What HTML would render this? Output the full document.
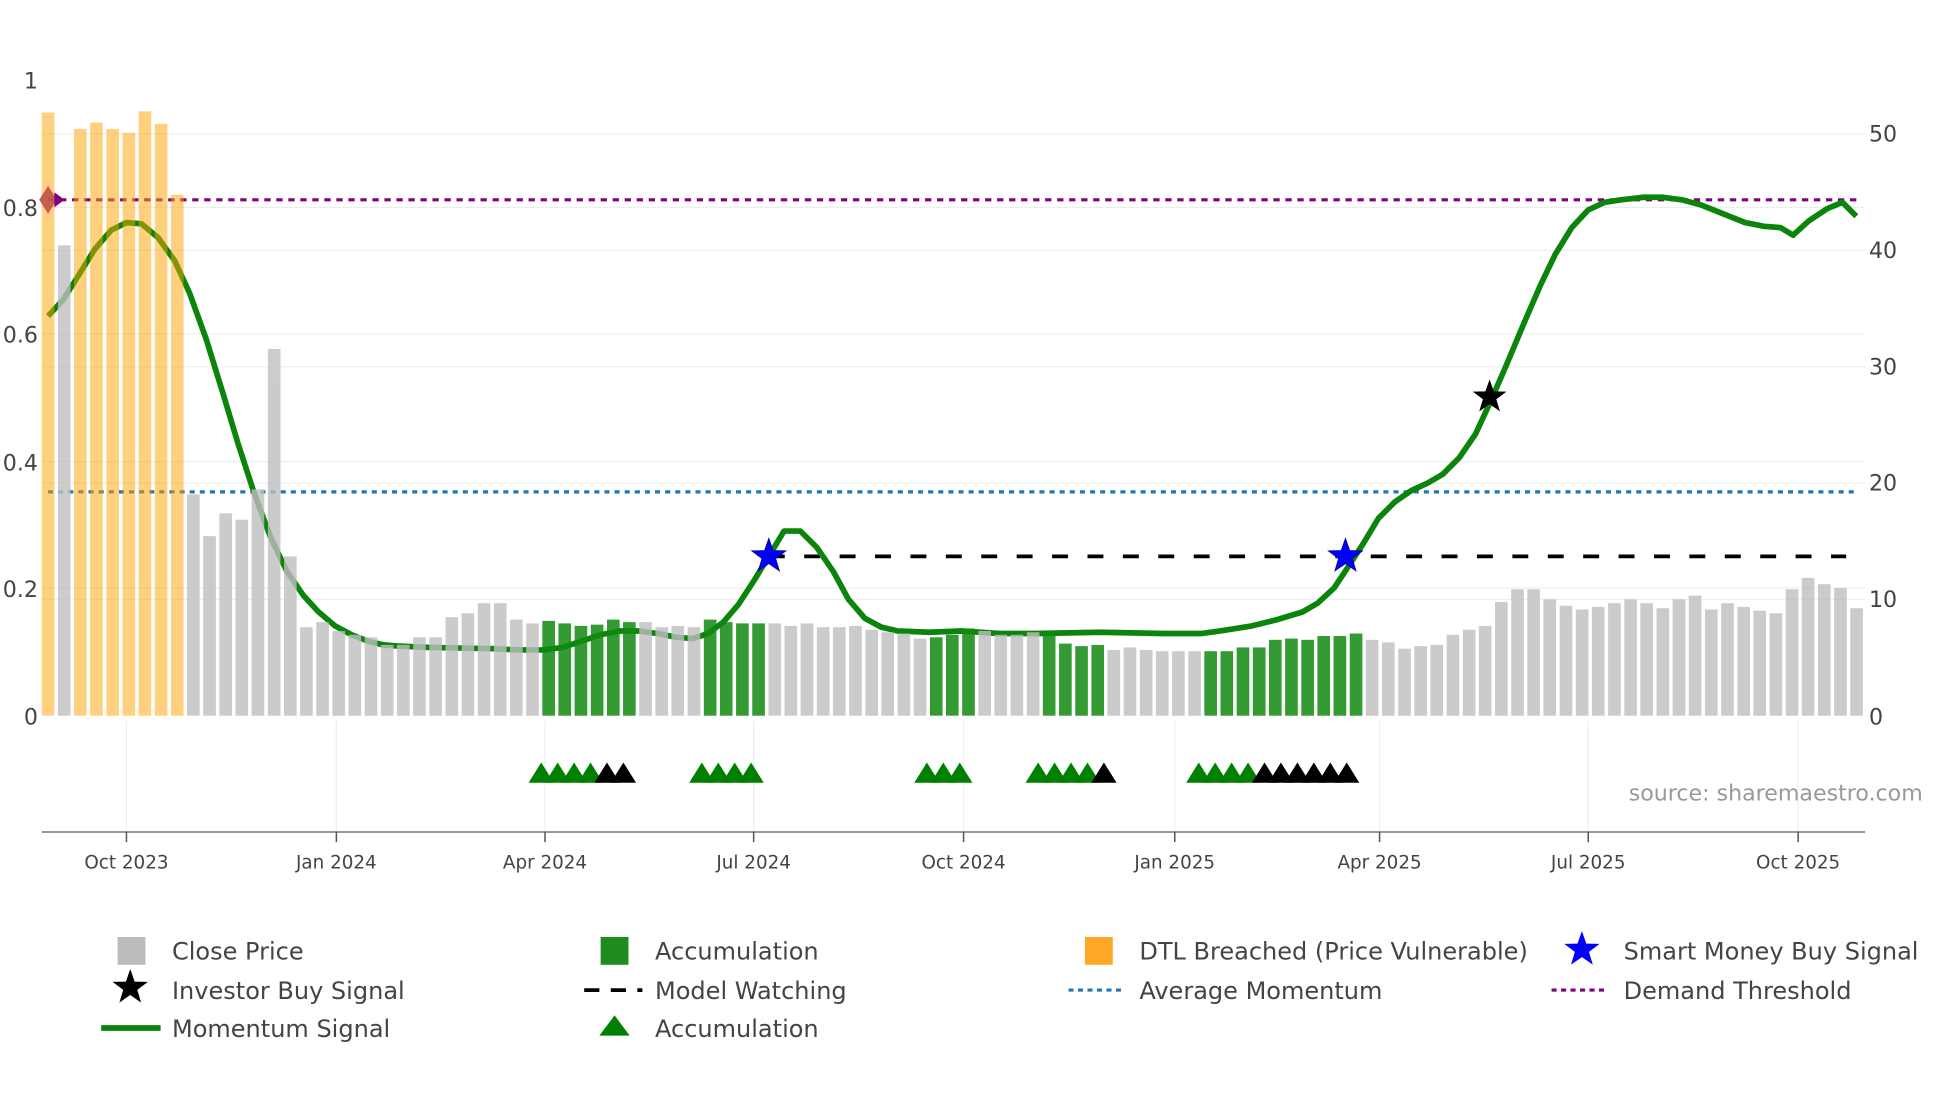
<!DOCTYPE html>
<html><head><meta charset="utf-8"><style>
html,body{margin:0;padding:0;background:#fff;}
svg{display:block;}
text{font-family:"DejaVu Sans","Liberation Sans",sans-serif;fill:#444;}
</style></head><body>
<svg width="1960" height="1102" viewBox="0 0 1550 871.5" preserveAspectRatio="none" xmlns="http://www.w3.org/2000/svg">
<rect width="1550" height="872" fill="#fff"/>
<!-- gridlines -->
<g stroke="#eceff2" stroke-width="1">
<line x1="33" x2="1475" y1="106" y2="106"/><line x1="33" x2="1475" y1="198" y2="198"/><line x1="33" x2="1475" y1="290" y2="290"/><line x1="33" x2="1475" y1="382" y2="382"/><line x1="33" x2="1475" y1="474" y2="474"/>
<line x1="33" x2="1475" y1="164" y2="164"/><line x1="33" x2="1475" y1="264" y2="264"/><line x1="33" x2="1475" y1="365" y2="365"/><line x1="33" x2="1475" y1="465" y2="465"/>
<line x1="100" x2="100" y1="570" y2="658"/><line x1="266" x2="266" y1="570" y2="658"/><line x1="431" x2="431" y1="570" y2="658"/><line x1="596" x2="596" y1="570" y2="658"/><line x1="762" x2="762" y1="570" y2="658"/><line x1="929" x2="929" y1="570" y2="658"/><line x1="1091" x2="1091" y1="570" y2="658"/><line x1="1256" x2="1256" y1="570" y2="658"/><line x1="1422" x2="1422" y1="570" y2="658"/>
</g>
<!-- lines -->
<line x1="38" x2="1470" y1="158" y2="158" stroke="#800080" stroke-width="2.5" stroke-dasharray="5,4.5"/>
<line x1="38" x2="1470" y1="389" y2="389" stroke="#1f77b4" stroke-width="2.5" stroke-dasharray="4,4"/>
<line x1="608" x2="1460" y1="440" y2="440" stroke="#000" stroke-width="3" stroke-dasharray="12.6,15.4"/>
<path fill="none" stroke="#0a840a" stroke-width="4.5" stroke-linejoin="round" d="M38,250 L50,237 L62,218 L75,197 L88,182 L100,176 L112,177 L125,188 L138,206 L150,232 L163,268 L176,310 L188,350 L201,390 L214,425 L227,452 L240,471 L252,484 L265,495 L278,502 L291,507 L303,510 L316,511 L340,512 L390,513 L410,514 L430,514 L445,512 L460,507 L475,502 L490,499 L505,499 L520,501 L535,504 L548,505 L560,501 L572,492 L584,478 L597,458 L608,440 L620,420 L633,420 L646,433 L659,452 L671,474 L684,489 L697,496 L710,499 L735,500 L760,499 L790,501 L820,501 L870,500 L920,501 L950,501 L965,499 L990,495 L1010,490 L1030,484 L1042,477 L1055,465 L1065,450 L1078,430 L1090,410 L1103,397 L1116,388 L1129,382 L1141,375 L1154,362 L1167,343 L1179,317 L1192,287 L1205,256 L1218,226 L1230,201 L1243,180 L1256,166 L1269,160 L1282,158 L1300,156 L1315,156 L1330,158 L1345,162 L1360,168 L1380,176 L1395,179 L1408,180 L1418,186 L1430,175 L1445,165 L1457,160 L1468,171"/>
<!-- bars -->
<g opacity="0.5" fill="#ffa500">
<rect x="33" y="89" width="10" height="477"/><rect x="58.5" y="102" width="10" height="464"/><rect x="71.3" y="97" width="10" height="469"/><rect x="84.1" y="102" width="10" height="464"/><rect x="96.9" y="105" width="10" height="461"/><rect x="109.6" y="88" width="10" height="478"/><rect x="122.4" y="98" width="10" height="468"/><rect x="135.2" y="154" width="10" height="412"/>
</g>
<g opacity="0.8" fill="#bfbfbf">
<rect x="45.8" y="194" width="10" height="372"/>
<rect x="147.9" y="391" width="10" height="175"/><rect x="160.7" y="424" width="10" height="142"/><rect x="173.5" y="406" width="10" height="160"/><rect x="186.2" y="411" width="10" height="155"/><rect x="199" y="387" width="10" height="179"/><rect x="211.8" y="276" width="10" height="290"/><rect x="224.6" y="440" width="10" height="126"/><rect x="237.3" y="496" width="10" height="70"/><rect x="250.1" y="492" width="10" height="74"/><rect x="262.9" y="499" width="10" height="67"/><rect x="275.6" y="502" width="10" height="64"/><rect x="288.4" y="504" width="10" height="62"/><rect x="301.2" y="510" width="10" height="56"/><rect x="313.9" y="510" width="10" height="56"/><rect x="326.7" y="504" width="10" height="62"/><rect x="339.5" y="504" width="10" height="62"/><rect x="352.3" y="488" width="10" height="78"/><rect x="365" y="485" width="10" height="81"/><rect x="377.8" y="477" width="10" height="89"/><rect x="390.6" y="477" width="10" height="89"/><rect x="403.3" y="490" width="10" height="76"/><rect x="416.1" y="493" width="10" height="73"/>
<rect x="505.5" y="492" width="10" height="74"/><rect x="518.3" y="496" width="10" height="70"/><rect x="531" y="495" width="10" height="71"/><rect x="543.8" y="496" width="10" height="70"/>
<rect x="607.7" y="493" width="10" height="73"/><rect x="620.4" y="495" width="10" height="71"/><rect x="633.2" y="493" width="10" height="73"/><rect x="646" y="496" width="10" height="70"/><rect x="658.7" y="496" width="10" height="70"/><rect x="671.5" y="495" width="10" height="71"/><rect x="684.3" y="498" width="10" height="68"/><rect x="697" y="500" width="10" height="66"/><rect x="709.8" y="501" width="10" height="65"/><rect x="722.6" y="505" width="10" height="61"/>
<rect x="773.7" y="499" width="10" height="67"/><rect x="786.4" y="502" width="10" height="64"/><rect x="799.2" y="502" width="10" height="64"/><rect x="812" y="500" width="10" height="66"/>
<rect x="875.8" y="514" width="10" height="52"/><rect x="888.6" y="512" width="10" height="54"/><rect x="901.4" y="514" width="10" height="52"/><rect x="914.1" y="515" width="10" height="51"/><rect x="926.9" y="515" width="10" height="51"/><rect x="939.7" y="515" width="10" height="51"/>
<rect x="1080.1" y="506" width="10" height="60"/><rect x="1092.9" y="508" width="10" height="58"/><rect x="1105.7" y="513" width="10" height="53"/><rect x="1118.5" y="511" width="10" height="55"/><rect x="1131.2" y="510" width="10" height="56"/><rect x="1144" y="502" width="10" height="64"/><rect x="1156.8" y="498" width="10" height="68"/><rect x="1169.5" y="495" width="10" height="71"/><rect x="1182.3" y="476" width="10" height="90"/><rect x="1195.1" y="466" width="10" height="100"/><rect x="1207.8" y="466" width="10" height="100"/><rect x="1220.6" y="474" width="10" height="92"/><rect x="1233.4" y="479" width="10" height="87"/><rect x="1246.2" y="482" width="10" height="84"/><rect x="1258.9" y="480" width="10" height="86"/><rect x="1271.7" y="477" width="10" height="89"/><rect x="1284.5" y="474" width="10" height="92"/><rect x="1297.2" y="477" width="10" height="89"/><rect x="1310" y="481" width="10" height="85"/><rect x="1322.8" y="474" width="10" height="92"/><rect x="1335.5" y="471" width="10" height="95"/><rect x="1348.3" y="482" width="10" height="84"/><rect x="1361.1" y="477" width="10" height="89"/><rect x="1373.9" y="480" width="10" height="86"/><rect x="1386.6" y="483" width="10" height="83"/><rect x="1399.4" y="485" width="10" height="81"/><rect x="1412.2" y="466" width="10" height="100"/><rect x="1424.9" y="457" width="10" height="109"/><rect x="1437.7" y="462" width="10" height="104"/><rect x="1450.5" y="465" width="10" height="101"/><rect x="1463.2" y="481" width="10" height="85"/>
</g>
<g opacity="0.85" fill="#118a11">
<rect x="428.9" y="491" width="10" height="75"/><rect x="441.6" y="493" width="10" height="73"/><rect x="454.4" y="495" width="10" height="71"/><rect x="467.2" y="494" width="10" height="72"/><rect x="480" y="490" width="10" height="76"/><rect x="492.7" y="492" width="10" height="74"/>
<rect x="556.6" y="490" width="10" height="76"/><rect x="569.3" y="492" width="10" height="74"/><rect x="582.1" y="493" width="10" height="73"/><rect x="594.9" y="493" width="10" height="73"/>
<rect x="735.4" y="504" width="10" height="62"/><rect x="748.1" y="502" width="10" height="64"/><rect x="760.9" y="497" width="10" height="69"/>
<rect x="824.7" y="500" width="10" height="66"/><rect x="837.5" y="509" width="10" height="57"/><rect x="850.3" y="511" width="10" height="55"/><rect x="863.1" y="510" width="10" height="56"/><rect x="875.8" y="513" width="10" height="53" opacity="0"/>
<rect x="952.4" y="515" width="10" height="51"/><rect x="965.2" y="515" width="10" height="51"/><rect x="978" y="512" width="10" height="54"/><rect x="990.8" y="512" width="10" height="54"/><rect x="1003.5" y="506" width="10" height="60"/><rect x="1016.3" y="505" width="10" height="61"/><rect x="1029.1" y="506" width="10" height="60"/><rect x="1041.8" y="503" width="10" height="63"/><rect x="1054.6" y="503" width="10" height="63"/><rect x="1067.4" y="501" width="10" height="65"/>
</g>
<!-- diamond marker -->
<polygon points="38,147 45,158 38,169 31,158" fill="#c0504d" opacity="0.9"/>
<polygon points="43,152 51,158 43,164" fill="#800080"/>
<!-- stars -->
<g stroke-width="0.8">
<polygon transform="translate(608,440)" fill="#0000ff" stroke="#0000aa" points="0,-14 3.3,-4.5 13.3,-4.3 5.3,1.7 8.2,11.3 0,5.6 -8.2,11.3 -5.3,1.7 -13.3,-4.3 -3.3,-4.5"/>
<polygon transform="translate(1064,440)" fill="#0000ff" stroke="#0000aa" points="0,-14 3.3,-4.5 13.3,-4.3 5.3,1.7 8.2,11.3 0,5.6 -8.2,11.3 -5.3,1.7 -13.3,-4.3 -3.3,-4.5"/>
<polygon transform="translate(1178,314)" fill="#000" points="0,-14 3.3,-4.5 13.3,-4.3 5.3,1.7 8.2,11.3 0,5.6 -8.2,11.3 -5.3,1.7 -13.3,-4.3 -3.3,-4.5"/>
</g>
<!-- triangles -->
<g fill="#008000">
<polygon points="418,619 428,603 438,619"/><polygon points="431,619 441,603 451,619"/><polygon points="444,619 454,603 464,619"/><polygon points="457,619 467,603 477,619"/>
<polygon points="545,619 555,603 565,619"/><polygon points="558,619 568,603 578,619"/><polygon points="571,619 581,603 591,619"/><polygon points="584,619 594,603 604,619"/>
<polygon points="723,619 733,603 743,619"/><polygon points="736,619 746,603 756,619"/><polygon points="749,619 759,603 769,619"/>
<polygon points="811,619 821,603 831,619"/><polygon points="824,619 834,603 844,619"/><polygon points="837,619 847,603 857,619"/><polygon points="850,619 860,603 870,619"/>
<polygon points="938,619 948,603 958,619"/><polygon points="951,619 961,603 971,619"/><polygon points="964,619 974,603 984,619"/><polygon points="977,619 987,603 997,619"/>
</g>
<g fill="#000">
<polygon points="470,619 480,603 490,619"/><polygon points="483,619 493,603 503,619"/>
<polygon points="863,619 873,603 883,619"/>
<polygon points="990,619 1000,603 1010,619"/><polygon points="1003,619 1013,603 1023,619"/><polygon points="1016,619 1026,603 1036,619"/><polygon points="1029,619 1039,603 1049,619"/><polygon points="1042,619 1052,603 1062,619"/><polygon points="1055,619 1065,603 1075,619"/>
</g>
<!-- axes -->
<line x1="33" x2="1475" y1="658" y2="658" stroke="#777" stroke-width="1.2"/>
<g stroke="#555" stroke-width="1.2">
<line x1="100" x2="100" y1="658" y2="666"/><line x1="266" x2="266" y1="658" y2="666"/><line x1="431" x2="431" y1="658" y2="666"/><line x1="596" x2="596" y1="658" y2="666"/><line x1="762" x2="762" y1="658" y2="666"/><line x1="929" x2="929" y1="658" y2="666"/><line x1="1091" x2="1091" y1="658" y2="666"/><line x1="1256" x2="1256" y1="658" y2="666"/><line x1="1422" x2="1422" y1="658" y2="666"/>
</g>
<g font-size="14.5" text-anchor="middle">
<text x="100" y="687">Oct 2023</text><text x="266" y="687">Jan 2024</text><text x="431" y="687">Apr 2024</text><text x="596" y="687">Jul 2024</text><text x="762" y="687">Oct 2024</text><text x="929" y="687">Jan 2025</text><text x="1091" y="687">Apr 2025</text><text x="1256" y="687">Jul 2025</text><text x="1422" y="687">Oct 2025</text>
</g>
<g font-size="17.5" text-anchor="end">
<text x="30" y="70">1</text><text x="30" y="171">0.8</text><text x="30" y="271">0.6</text><text x="30" y="372">0.4</text><text x="30" y="472">0.2</text><text x="30" y="573">0</text>
</g>
<g font-size="17.5">
<text x="1478" y="112">50</text><text x="1478" y="204">40</text><text x="1478" y="296">30</text><text x="1478" y="388">20</text><text x="1478" y="480">10</text><text x="1478" y="573">0</text>
</g>
<text x="1288" y="633" font-size="17.5" style="fill:#999">source: sharemaestro.com</text>
<!-- legend -->
<g font-size="19">
<rect x="93" y="741" width="22" height="22" fill="#bbb"/><text x="136" y="759">Close Price</text>
<polygon transform="translate(103,781) scale(1.05)" fill="#000" points="0,-14 3.3,-4.5 13.3,-4.3 5.3,1.7 8.2,11.3 0,5.6 -8.2,11.3 -5.3,1.7 -13.3,-4.3 -3.3,-4.5"/><text x="136" y="790">Investor Buy Signal</text>
<line x1="80" x2="127" y1="813" y2="813" stroke="#0a840a" stroke-width="4.5"/><text x="136" y="820">Momentum Signal</text>
<rect x="475" y="741" width="22" height="22" fill="#1e8c1e"/><text x="518" y="759">Accumulation</text>
<line x1="462" x2="508" y1="783" y2="783" stroke="#000" stroke-width="3" stroke-dasharray="12,9"/><text x="518" y="790">Model Watching</text>
<polygon points="474,819 486,803 498,819" fill="#008000"/><text x="518" y="820">Accumulation</text>
<rect x="858" y="741" width="22" height="22" fill="#ffa726"/><text x="901" y="759">DTL Breached (Price Vulnerable)</text>
<line x1="845" x2="890" y1="783" y2="783" stroke="#1f77b4" stroke-width="2.5" stroke-dasharray="4,3.5"/><text x="901" y="790">Average Momentum</text>
<polygon transform="translate(1251,751) scale(1.05)" fill="#0000ff" points="0,-14 3.3,-4.5 13.3,-4.3 5.3,1.7 8.2,11.3 0,5.6 -8.2,11.3 -5.3,1.7 -13.3,-4.3 -3.3,-4.5"/><text x="1284" y="759">Smart Money Buy Signal</text>
<line x1="1227" x2="1272" y1="783" y2="783" stroke="#800080" stroke-width="2.5" stroke-dasharray="4,3.5"/><text x="1284" y="790">Demand Threshold</text>
</g>
</svg>
</body></html>
